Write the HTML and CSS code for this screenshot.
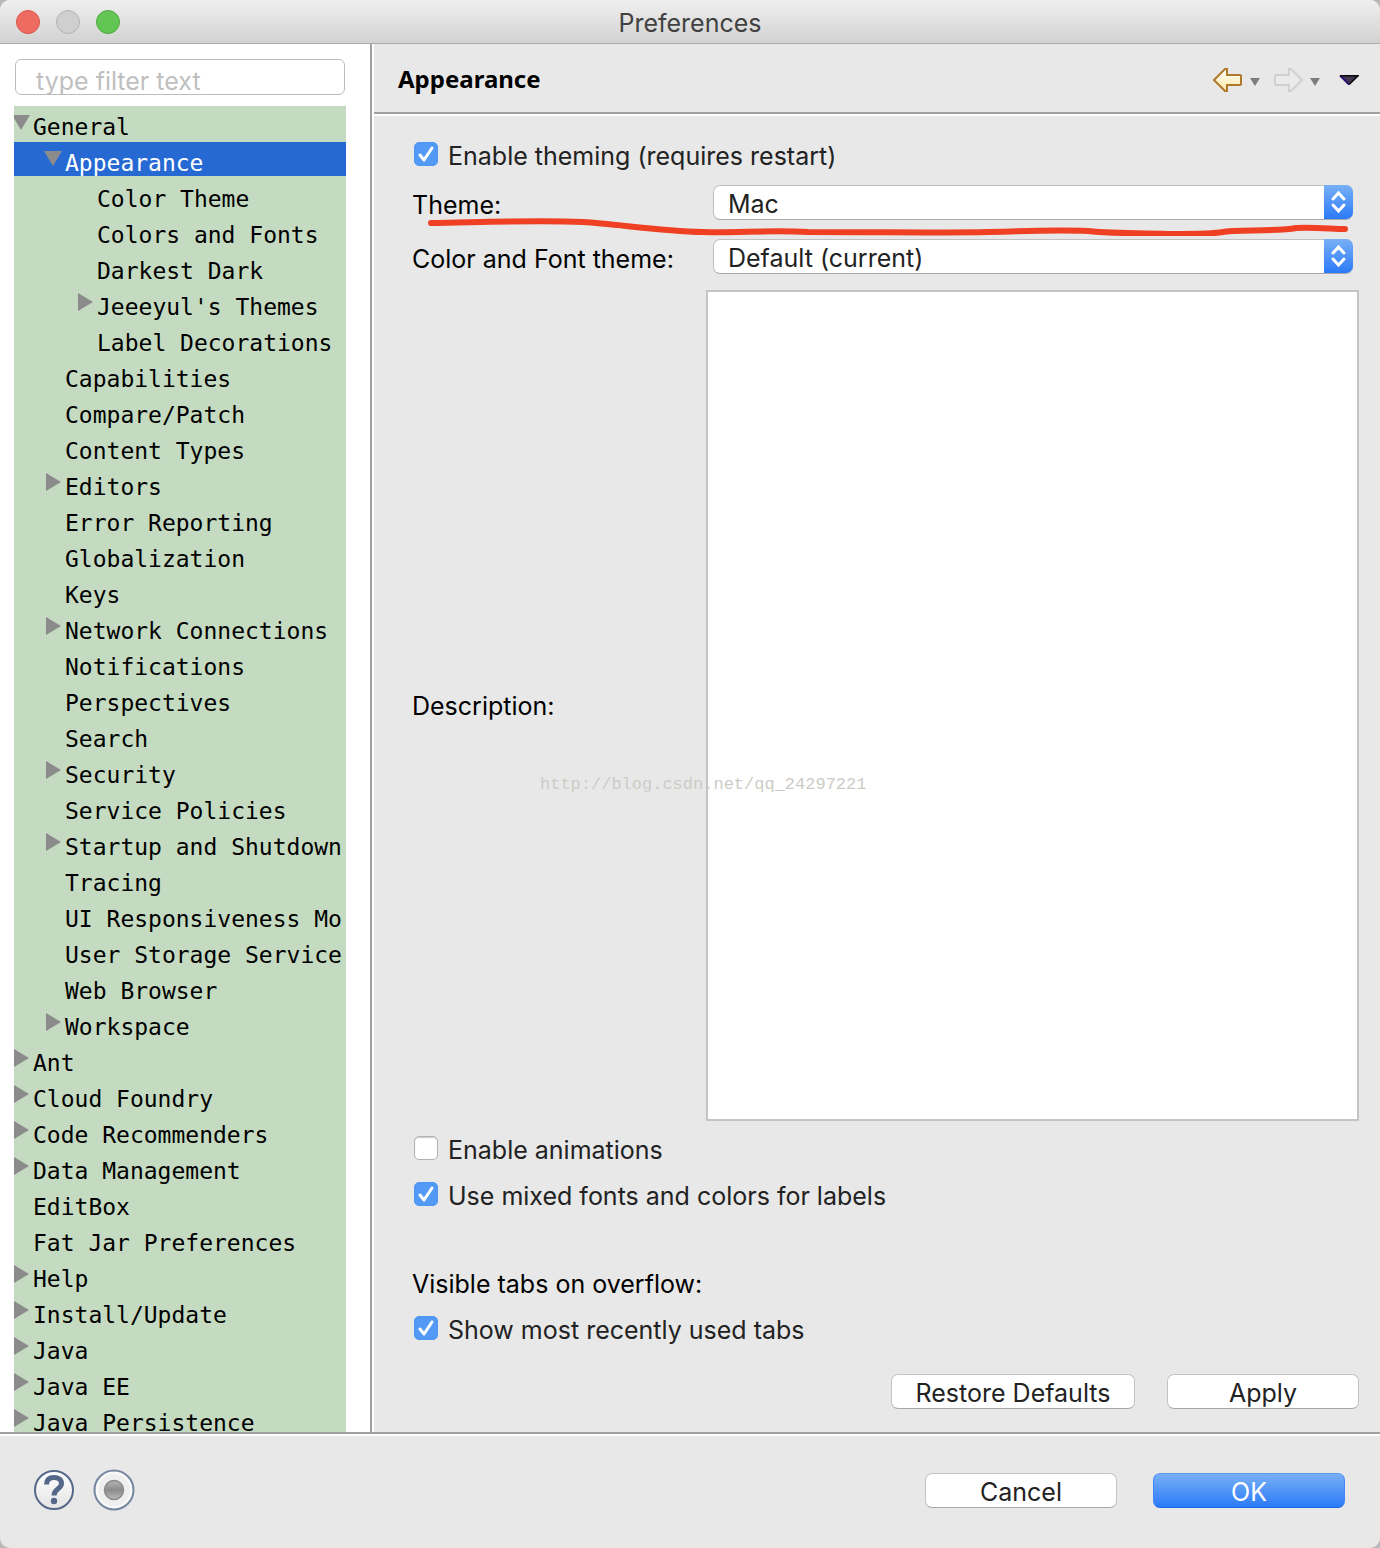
FILE: index.html
```html
<!DOCTYPE html>
<html lang="en">
<head>
<meta charset="utf-8">
<title>Preferences</title>
<link rel="stylesheet" href="styles.css">
</head>
<body>
<div class="window">
  <header class="titlebar">
    <div class="lights">
      <button class="light light-close" aria-label="Close"></button>
      <button class="light light-min" aria-label="Minimize" disabled></button>
      <button class="light light-zoom" aria-label="Zoom"></button>
    </div>
    <h1 class="window-title">Preferences</h1>
  </header>
  <div class="panes">
    <nav class="sidebar">
      <input class="filter" type="text" placeholder="type filter text" aria-label="Filter">
      <ul class="tree" id="tree"></ul>
    </nav>
    <main class="page">
      <div class="page-head">
        <h2 class="page-title">Appearance</h2>
        <div class="history">
          <button class="tool" aria-label="Back"><svg width="30" height="26" viewBox="0 0 30 26"><defs><linearGradient id="gold" x1="0" y1="0" x2="0" y2="1"><stop offset="0" stop-color="#fff"/><stop offset="1" stop-color="#fbe7a0"/></linearGradient></defs><path d="M1 13 L12 2 H14 V8 H27 Q28 8 28 9 V17 Q28 18 27 18 H14 V24 H12 Z" fill="url(#gold)" stroke="#af7a2c" stroke-width="2"/></svg></button>
          <button class="tool tool-menu" aria-label="Back history"><svg width="10" height="8" viewBox="0 0 10 8"><path d="M0 0H10L5 8Z" fill="#7d7d7d"/></svg></button>
          <button class="tool" aria-label="Forward" disabled><svg width="30" height="26" viewBox="0 0 30 26"><path d="M29 13 L18 2 H16 V8 H3 Q2 8 2 9 V17 Q2 18 3 18 H16 V24 H18 Z" fill="#ebebeb" stroke="#d0d0d0" stroke-width="2"/></svg></button>
          <button class="tool tool-menu" aria-label="Forward history"><svg width="10" height="8" viewBox="0 0 10 8"><path d="M0 0H10L5 8Z" fill="#7d7d7d"/></svg></button>
          <button class="tool tool-view" aria-label="View menu"><svg width="20" height="10" viewBox="0 0 20 10"><path d="M1 0.5H19L10 9.500Z" fill="#43364f"/><path d="M10 9.500L1 0.5" stroke="#2b0f78" stroke-width="2"/><path d="M1 0.8H19L10 9.500" fill="none" stroke="#0c0a0e" stroke-width="1.600"/></svg></button>
        </div>
      </div>
      <form class="form">
        <label class="check"><input class="box" type="checkbox" checked><svg class="tick" viewBox="0 0 24 24"><path d="M6 13L10 18L18 6"/></svg><span>Enable theming (requires restart)</span></label>
        <div class="fields">
          <label for="theme">Theme:</label>
          <div class="pick"><select id="theme"><option>Mac</option></select><svg class="arrows" viewBox="0 0 29 34"><path d="M9 14L14.500 8L20 14M9 20L14.500 26L20 20"/></svg></div>
          <label for="font-theme">Color and Font theme:</label>
          <div class="pick"><select id="font-theme"><option>Default (current)</option></select><svg class="arrows" viewBox="0 0 29 34"><path d="M9 14L14.500 8L20 14M9 20L14.500 26L20 20"/></svg></div>
          <label class="desc-label" for="description">Description:</label>
          <textarea id="description"></textarea>
          <svg class="scribble" viewBox="0 0 920 20" preserveAspectRatio="none"><path d="M3 7C60 6 110 4 155 6C190 8 230 15 275 16C310 17 340 14 380 16C460 16 520 17 560 16C590 15 630 14 660 15C690 18 720 17 745 18C770 18 785 18 795 16C805 13 850 16 868 12C885 11 905 13 917 13"/></svg>
          <p class="watermark">http://blog.csdn.net/qq_24297221</p>
        </div>
        <div class="checks">
          <label class="check"><input class="box" type="checkbox"><svg class="tick" viewBox="0 0 24 24"><path d="M6 13L10 18L18 6"/></svg><span>Enable animations</span></label>
          <label class="check"><input class="box" type="checkbox" checked><svg class="tick" viewBox="0 0 24 24"><path d="M6 13L10 18L18 6"/></svg><span>Use mixed fonts and colors for labels</span></label>
        </div>
        <fieldset class="tabs">
          <legend>Visible tabs on overflow:</legend>
          <label class="check"><input class="box" type="checkbox" checked><svg class="tick" viewBox="0 0 24 24"><path d="M6 13L10 18L18 6"/></svg><span>Show most recently used tabs</span></label>
        </fieldset>
        <div class="page-actions">
          <button class="btn btn-wide" type="button">Restore Defaults</button>
          <button class="btn" type="button">Apply</button>
        </div>
      </form>
    </main>
  </div>
  <footer class="footer">
    <button class="round" aria-label="Help"><svg width="42" height="42" viewBox="0 0 42 42"><defs><linearGradient id="face" x1="0" y1="0" x2="0" y2="1"><stop offset="0" stop-color="#fff"/><stop offset="1" stop-color="#e4e4e4"/></linearGradient></defs><circle cx="21" cy="21" r="19" fill="url(#face)" stroke="#55688a" stroke-width="2"/><path d="M13.500 15.500C13.500 10 17 8.500 21 8.500C25.500 8.500 28.500 10.500 28.500 14.500C28.500 20 21 19.500 21 26.500" fill="none" stroke="#55688a" stroke-width="5"/><circle cx="21" cy="32" r="3.200" fill="#55688a"/></svg></button>
    <button class="round" aria-label="Record"><svg width="42" height="42" viewBox="0 0 42 42"><defs><linearGradient id="knob" x1="0" y1="0" x2="0" y2="1"><stop offset="0" stop-color="#b5b5b5"/><stop offset="0.500" stop-color="#8c8c8c"/><stop offset="1" stop-color="#b8b8b8"/></linearGradient></defs><circle cx="21" cy="21" r="19.500" fill="#efefef" stroke="#76869f" stroke-width="2"/><circle cx="21" cy="21" r="17" fill="none" stroke="#fafafa" stroke-width="2"/><circle cx="21" cy="21" r="9.500" fill="url(#knob)" stroke="#8a8a8a" stroke-width="1.500"/></svg></button>
    <div class="dialog-actions">
      <button class="btn">Cancel</button>
      <button class="btn btn-primary">OK</button>
    </div>
  </footer>
</div>
<script src="tree.js"></script>
</body>
</html>
```
FILE: styles.css
```css
* { box-sizing: border-box; }
body { margin: 0; background: #b9b9b9; font: 25px/32px Inter, sans-serif; color: #000; }
button, input, select, textarea { font: inherit; color: inherit; margin: 0; }
h1, h2, p, ul { margin: 0; padding: 0; }
svg { display: block; }

.window { display: flex; flex-direction: column; height: 100vh; background: #e8e8e8; border-radius: 10px; overflow: hidden; }

.titlebar { display: grid; grid-template-columns: 1fr auto 1fr; align-items: center; height: 44px; flex: none; padding: 0 16px; background: linear-gradient(#efefef, #d2d2d2); border-bottom: 1px solid #ababab; }
.lights { display: flex; gap: 16px; }
.light { width: 24px; height: 24px; padding: 0; border: 1px solid; border-radius: 50%; }
.light-close { background: #ed6b60; border-color: #d85248; }
.light-min { background: #cfcfcf; border-color: #b3b3b3; }
.light-zoom { background: #62c655; border-color: #4fa73f; }
.window-title { font-size: 25px; font-weight: 400; color: #414141; padding-top: 2px; }

.panes { display: flex; flex: 1; min-height: 0; }
.sidebar { display: flex; flex-direction: column; width: 372px; flex: none; padding: 15px 24px 0 14px; background: #fff; border-right: 2px solid #a0a0a0; }
.filter { height: 36px; margin: 0 1px 11px; padding: 8px 20px 0; flex: none; border: 1px solid #bcbcbc; border-radius: 6px; background: #fff; line-height: 26px; }
.filter::placeholder { color: #bfbfbf; opacity: 1; }

.tree, .tree ul { list-style: none; }
.tree { flex: 1; min-height: 0; overflow: hidden; background: #c5dbc1; font: 23px/30px "DejaVu Sans Mono", monospace; }
.row { display: flex; height: 34px; margin-bottom: 2px; overflow: hidden; white-space: nowrap; }
.level-1 { padding-left: 32px; }
.level-2 { padding-left: 64px; }
.twisty { width: 19px; height: 34px; flex: none; padding: 0; border: 0; background: none; }
.twisty svg { overflow: visible; fill: #8b8b8b; }
.row a { padding-top: 6px; color: #000; text-decoration: none; }
.row.selected { background: #2669d3; }
.row.selected a { color: #fff; }

.page { display: flex; flex-direction: column; flex: 1; min-width: 0; border-left: 2px solid #fff; }
.page-head { display: flex; align-items: center; justify-content: space-between; height: 72px; flex: none; padding: 0 21px 0 24px; border-bottom: 2px solid #fff; box-shadow: inset 0 -2px #a0a0a0; }
.page-title { font: bold 24px/32px "Noto Sans", sans-serif; }
.history { display: flex; align-items: center; padding-top: 2px; }
.tool { padding: 0; border: 0; background: none; }
.tool-menu { padding: 4px 13px 0 7px; }
.tool-view { padding: 0 0 0 6px; }

.form { display: flex; flex-direction: column; flex: 1; min-height: 0; padding: 24px 21px 23px 38px; }
.check { display: grid; grid-template-columns: 24px auto; column-gap: 10px; justify-content: start; color: #222; padding-left: 2px; }
.box, .tick { grid-area: 1 / 1; width: 24px; height: 24px; margin-top: 2px; }
.box { appearance: none; border: 1px solid #b3b3b3; border-radius: 5px; background: #fff; box-shadow: inset 0 1px 1px #c8c8c8; }
.box:checked { border-color: #4d96f3; background: #529af5; box-shadow: none; }
.tick { visibility: hidden; fill: none; stroke: #fff; stroke-width: 3; stroke-linecap: round; stroke-linejoin: round; pointer-events: none; }
.box:checked + .tick { visibility: visible; }

.fields { position: relative; display: grid; grid-template-columns: 294px 1fr; grid-template-rows: 34px 34px 1fr; row-gap: 20px; flex: 1; min-height: 0; margin-top: 13px; }
.fields label { padding-top: 4px; }
.fields .desc-label { align-self: center; padding: 0; }
.pick { display: grid; grid-template-columns: 1fr 29px; margin: 0 6px 0 7px; }
.pick select { grid-area: 1 / 1 / 2 / 3; width: 100%; height: 35px; padding: 4px 36px 0 14px; appearance: none; border: 1px solid #c0c0c0; border-bottom-color: #a8a8a8; border-radius: 7px; background: #fff; color: #222; line-height: 29px; }
.arrows { grid-area: 1 / 2; width: 29px; height: 34px; border-radius: 0 7px 7px 0; background: linear-gradient(#78b0f6, #2b7af8); fill: none; stroke: #fff; stroke-width: 3; stroke-linecap: round; pointer-events: none; }
.fields textarea { height: calc(100% + 6px); margin-top: -3px; resize: none; border: 2px solid #c4c4c4; background: #fff; }
.scribble { position: absolute; left: 16px; top: 31px; width: calc(100% - 27px); height: 20px; fill: none; stroke: #ef4023; stroke-width: 6; stroke-linecap: round; stroke-linejoin: round; pointer-events: none; }
.watermark { position: absolute; left: 128px; top: 584px; font: 17px/32px "Liberation Mono", monospace; color: #ccccc6; }

.checks { display: grid; row-gap: 14px; margin-top: 16px; }
.tabs { margin: 56px 0 0; padding: 0; border: 0; }
.tabs legend { padding: 0; margin-bottom: 14px; }
.page-actions { display: flex; justify-content: flex-end; gap: 32px; margin-top: 28px; }

.btn { width: 192px; height: 35px; padding: 3px 0 0; border: 1px solid #c4c4c4; border-bottom-color: #a8a8a8; border-radius: 7px; background: #fff; color: #222; line-height: 28px; }
.btn-wide { width: 244px; }
.btn-primary { border-color: #5b9df5 #3f88f5 #1f64e8; background: linear-gradient(#78b0f6, #2b7af8); color: #fff; }

.footer { display: flex; align-items: center; gap: 18px; height: 116px; flex: none; padding: 0 35px 2px 33px; border-top: 2px solid #a0a0a0; box-shadow: inset 0 2px #fff; }
.round { padding: 0; border: 0; background: none; }
.dialog-actions { display: flex; gap: 36px; margin-left: auto; }
```
FILE: tree.js
```js
const entries = [
  [0, "General", "open"], [1, "Appearance", "open"], [2, "Color Theme"], [2, "Colors and Fonts"],
  [2, "Darkest Dark"], [2, "Jeeeyul's Themes", "closed"], [2, "Label Decorations"],
  [1, "Capabilities"], [1, "Compare/Patch"], [1, "Content Types"], [1, "Editors", "closed"],
  [1, "Error Reporting"], [1, "Globalization"], [1, "Keys"], [1, "Network Connections", "closed"],
  [1, "Notifications"], [1, "Perspectives"], [1, "Search"], [1, "Security", "closed"],
  [1, "Service Policies"], [1, "Startup and Shutdown", "closed"], [1, "Tracing"],
  [1, "UI Responsiveness Mo"], [1, "User Storage Service"], [1, "Web Browser"],
  [1, "Workspace", "closed"], [0, "Ant", "closed"], [0, "Cloud Foundry", "closed"],
  [0, "Code Recommenders", "closed"], [0, "Data Management", "closed"], [0, "EditBox"],
  [0, "Fat Jar Preferences"], [0, "Help", "closed"], [0, "Install/Update", "closed"],
  [0, "Java", "closed"], [0, "Java EE", "closed"], [0, "Java Persistence", "closed"]
];
const shapes = { open: "M-2 9H16L7 24Z", closed: "M0 7V25L15 16Z" };
document.getElementById("tree").innerHTML = entries.map(([level, name, state]) => {
  const selected = name === "Appearance" ? " selected" : "";
  const twisty = state
    ? `<button class="twisty" aria-label="Toggle ${name}"><svg width="19" height="34" viewBox="0 0 19 34"><path d="${shapes[state]}"/></svg></button>`
    : `<span class="twisty"></span>`;
  return `<li class="row level-${level}${selected}">${twisty}<a href="#">${name}</a></li>`;
}).join("");
```
